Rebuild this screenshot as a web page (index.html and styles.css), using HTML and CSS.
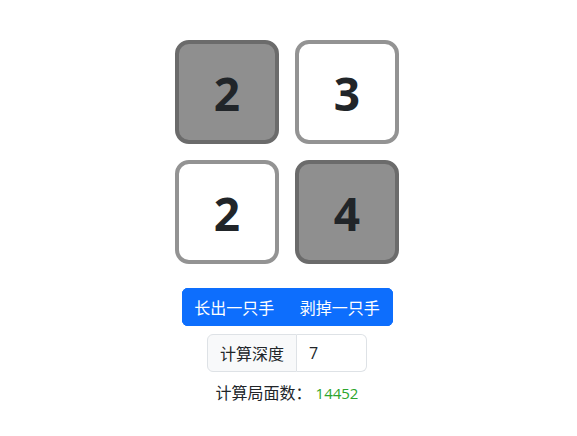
FILE: index.html
```html
<!DOCTYPE html>
<html lang="zh">
<head>
<meta charset="utf-8">
<link rel="stylesheet" href="styles.css">
</head>
<body>
<div class="app">
  <div class="board">
    <div class="card card-dark">2</div>
    <div class="card card-light">3</div>
    <div class="card card-light">2</div>
    <div class="card card-dark">4</div>
  </div>
  <div class="btn-group">
    <button class="btn">长出一只手</button>
    <button class="btn">剥掉一只手</button>
  </div>
  <div class="input-group">
    <span class="input-label">计算深度</span>
    <input class="input" type="text" value="7">
  </div>
  <div class="stats">计算局面数：<span class="count">14452</span></div>
</div>
</body>
</html>
```
FILE: styles.css
```css
* { box-sizing: border-box; }
html, body { margin: 0; padding: 0; background: #fff; }
body {
  font-family: "Segoe UI", "Open Sans", "Noto Sans CJK SC", sans-serif;
  color: #212529;
  font-size: 16px;
  line-height: 1.5;
}
.app {
  display: flex;
  flex-direction: column;
  align-items: center;
  padding-top: 40px;
  padding-right: 3px;
}
.board {
  display: grid;
  grid-template-columns: 104px 104px;
  grid-auto-rows: 104px;
  gap: 16px;
}
.card {
  border: 4px solid #919191;
  border-radius: 14px;
  display: flex;
  align-items: center;
  justify-content: center;
  font-family: "Open Sans", sans-serif;
  font-weight: 700;
  font-size: 46px;
  color: #212529;
  padding-top: 2px;
}
.card-dark { background: #8f8f8f; border-color: #6b6b6b; }
.card-light { background: #fff; border-color: #939393; }
.btn-group {
  display: flex;
  margin-top: 24px;
  background: #0d6efd;
  border-radius: 6px;
  overflow: hidden;
}
.btn {
  font-family: "Noto Sans CJK SC", sans-serif;
  font-size: 16px;
  line-height: 24px;
  color: #fff;
  background: #0d6efd;
  border: 1px solid #0d6efd;
  padding: 6px 12px;
  margin: 0;
  width: 105.5px;
  white-space: nowrap;
  display: flex;
  justify-content: center;
}
.input-group {
  display: flex;
  margin-top: 8px;
}
.input-label {
  font-family: "Noto Sans CJK SC", sans-serif;
  background: #f8f9fa;
  border: 1px solid #dee2e6;
  border-radius: 6px 0 0 6px;
  padding: 6px 12px;
  line-height: 24px;
  width: 90px;
  text-align: center;
}
.input {
  width: 70px;
  border: 1px solid #dee2e6;
  border-left: none;
  border-radius: 0 6px 6px 0;
  padding: 6px 12px;
  font-family: "Segoe UI", "Open Sans", sans-serif;
  font-size: 16px;
  line-height: 24px;
  color: #212529;
  outline: none;
}
.stats {
  margin-top: 8px;
  font-family: "Noto Sans CJK SC", sans-serif;
  line-height: 24px;
}
.count {
  color: #2ca52c;
  font-family: "Segoe UI", "Open Sans", sans-serif;
  font-size: 15px;
  margin-left: 4px;
}
```
